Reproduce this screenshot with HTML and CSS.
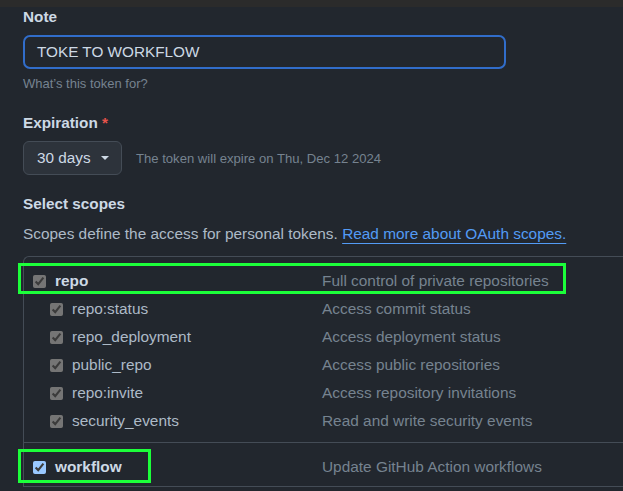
FILE: index.html
```html
<!DOCTYPE html>
<html>
<head>
<meta charset="utf-8">
<link rel="stylesheet" href="styles.css">
</head>
<body>
<div class="topbar"></div>
<main class="form">
  <label class="label">Note</label>
  <div class="input">TOKE TO WORKFLOW</div>
  <p class="hint">What’s this token for?</p>

  <label class="label label-exp">Expiration <span class="req">*</span></label>
  <div class="exp-row">
    <button class="select">30 days <span class="caret"></span></button>
    <span class="exp-note">The token will expire on Thu, Dec 12 2024</span>
  </div>

  <h3 class="label label-scopes">Select scopes</h3>
  <p class="desc">Scopes define the access for personal tokens. <a class="link" href="#">Read more about OAuth scopes.</a></p>

  <div class="scopes">
    <div class="group group-first">
      <div class="row">
        <span class="name"><input type="checkbox" checked disabled><b>repo</b></span>
        <span class="what">Full control of private repositories</span>
      </div>
      <div class="row sub">
        <span class="name"><input type="checkbox" checked disabled>repo:status</span>
        <span class="what">Access commit status</span>
      </div>
      <div class="row sub">
        <span class="name"><input type="checkbox" checked disabled>repo_deployment</span>
        <span class="what">Access deployment status</span>
      </div>
      <div class="row sub">
        <span class="name"><input type="checkbox" checked disabled>public_repo</span>
        <span class="what">Access public repositories</span>
      </div>
      <div class="row sub">
        <span class="name"><input type="checkbox" checked disabled>repo:invite</span>
        <span class="what">Access repository invitations</span>
      </div>
      <div class="row sub">
        <span class="name"><input type="checkbox" checked disabled>security_events</span>
        <span class="what">Read and write security events</span>
      </div>
    </div>
    <div class="group group-second">
      <div class="row">
        <span class="name"><input type="checkbox" checked><b>workflow</b></span>
        <span class="what">Update GitHub Action workflows</span>
      </div>
    </div>
  </div>
</main>
<div class="mark mark-repo"></div>
<div class="mark mark-workflow"></div>
</body>
</html>
```

FILE: styles.css
```css
html, body {
  margin: 0;
  padding: 0;
  background: #22272e;
  color-scheme: dark;
  font-family: "Liberation Sans", Arial, sans-serif;
  color: #adbac7;
  overflow: hidden;
}
body { position: relative; height: 491px; }
.topbar {
  height: 7px;
  background: #2b2b2b;
}
.form {
  padding-left: 23px;
}
.label {
  display: block;
  margin: 0;
  font-size: 15.3px;
  font-weight: bold;
  line-height: 20px;
  color: #cdd9e5;
}
.req { color: #e5534b; }
.input {
  margin-top: 8px;
  box-sizing: border-box;
  width: 483px;
  height: 34px;
  border: 2px solid #316dca;
  border-radius: 7px;
  padding-left: 12px;
  font-size: 15.3px;
  line-height: 30px;
  color: #cdd9e5;
}
.hint {
  margin: 6px 0 0;
  font-size: 13px;
  line-height: 18px;
  color: #768390;
}
.label-exp { margin-top: 20px; }
.exp-row {
  margin-top: 8px;
  display: flex;
  align-items: center;
}
.select {
  box-sizing: border-box;
  width: 99px;
  height: 34px;
  background: #2d333b;
  border: 1px solid #444c56;
  border-radius: 6px;
  padding: 0 0 0 13px;
  display: flex;
  align-items: center;
  font-family: inherit;
  font-size: 15.3px;
  color: #cdd9e5;
}
.caret {
  margin-left: 10px;
  width: 0;
  height: 0;
  border-left: 4px solid transparent;
  border-right: 4px solid transparent;
  border-top: 4px solid #cdd9e5;
}
.exp-note {
  margin-left: 14px;
  font-size: 13.1px;
  color: #768390;
}
.label-scopes { margin-top: 19px; }
.desc {
  margin: 10px 0 0;
  font-size: 15.4px;
  line-height: 20px;
  color: #adbac7;
}
.link {
  color: #539bf5;
  text-decoration: underline;
  text-underline-offset: 4px;
}
.scopes {
  margin-top: 12px;
  border-top: 1px solid #444c56;
  border-left: 1px solid #444c56;
  border-top-left-radius: 6px;
}
.group-first { padding: 10px 0 7px; }
.group-second {
  border-top: 1px solid #444c56;
  border-bottom: 1px solid #444c56;
  padding: 10px 0 5px;
}
.row {
  display: grid;
  grid-template-columns: 298px 1fr;
  height: 28px;
  align-items: center;
  font-size: 15.4px;
}
.name {
  display: flex;
  align-items: center;
  padding-left: 9px;
  color: #adbac7;
}
.name b { color: #cdd9e5; }
.sub .name { padding-left: 26px; }
.name input {
  margin: 0 9px 0 0;
  width: 13px;
  height: 13px;
}
.what { color: #768390; }
.mark {
  position: absolute;
  border: 3px solid #1cff3a;
  box-sizing: border-box;
}
.mark-repo { left: 18px; top: 263px; width: 548px; height: 31px; }
.mark-workflow { left: 18px; top: 449px; width: 133px; height: 34px; }
```
